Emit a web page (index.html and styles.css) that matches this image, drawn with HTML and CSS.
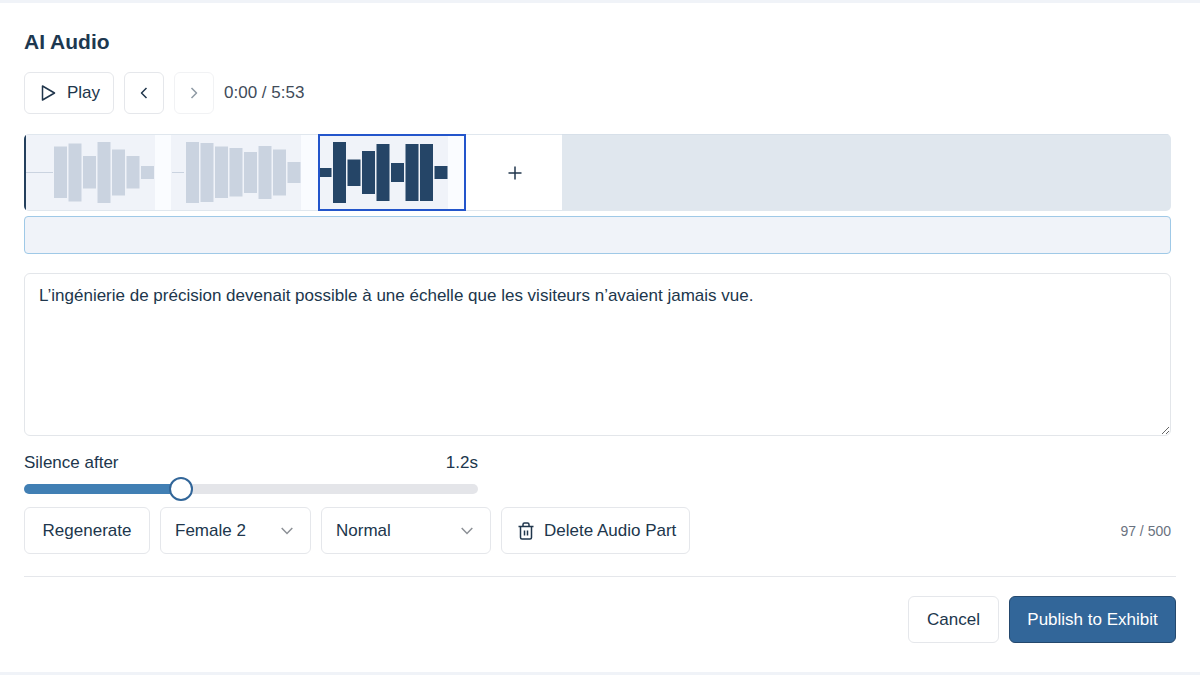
FILE: index.html
```html
<!DOCTYPE html>
<html lang="en">
<head>
<meta charset="utf-8">
<meta name="viewport" content="width=device-width, initial-scale=1">
<title>AI Audio</title>
<link rel="stylesheet" href="styles.css">
</head>
<body>
<main class="panel">
  <div class="editor">
    <h1 class="title">AI Audio</h1>
    <div class="transport">
      <button class="btn btn-play" type="button">
        <svg class="icon" width="15" height="18" viewBox="0 0 15 18"><path d="M1.500 2 13.500 9l-12 7Z"/></svg>
        Play
      </button>
      <button class="btn btn-step" type="button" aria-label="Previous part">
        <svg class="icon" width="12" height="14" viewBox="0 0 12 14"><path d="M8.500 2 3.500 7l5 5"/></svg>
      </button>
      <button class="btn btn-step" type="button" aria-label="Next part" disabled>
        <svg class="icon" width="12" height="14" viewBox="0 0 12 14"><path d="M3.500 2l5 5-5 5"/></svg>
      </button>
      <span class="time">0:00 / 5:53</span>
    </div>

    <div class="timeline">
      <button class="part" type="button" aria-label="Audio part 1">
        <svg class="wave wave-playhead" width="131" height="75" viewBox="2 0 129 75">
          <path d="M2 37h27v1H2zM30 11.500h13v51.500H30zM44.500 8.500h13v58h-13zM59 21h13v32.500H59zM73.500 7h13v61h-13zM88 14.500h13v46H88zM102.500 21h13v32.500h-13zM117 31h13v13h-13z"/>
        </svg>
      </button>
      <button class="part" type="button" aria-label="Audio part 2">
        <svg class="wave" width="130" height="75" viewBox="0 0 130 75">
          <path d="M1 37h12v1H1zM15 7h13v61H15zM29.500 8h13v59h-13zM44 11.500h13V63H44zM58.500 13h13v48.500h-13zM73 17h13v41H73zM87.500 11h13v53h-13zM102 14.500h13v46h-13zM116.500 27h13v21h-13z"/>
        </svg>
      </button>
      <button class="part part-selected" type="button" aria-label="Audio part 3" aria-pressed="true">
        <svg class="wave" width="128" height="73" viewBox="0 0 128 73">
          <path d="M0 32h11.500v9H0zM13 6h13v61H13zM27.500 23.500h13V50h-13zM42 15h13v43H42zM56.500 8h13v57h-13zM71 27h13v19H71zM85.500 8h13v57h-13zM100 8h13v57h-13zM114.500 30h13v13h-13z"/>
        </svg>
      </button>
      <button class="add" type="button" aria-label="Add part">
        <svg class="icon" width="14" height="14" viewBox="0 0 14 14"><path d="M7 .5v13M.5 7h13"/></svg>
      </button>
      <div class="rest"></div>
    </div>
    <div class="lane"></div>

    <textarea class="script" aria-label="Script">L’ingénierie de précision devenait possible à une échelle que les visiteurs n’avaient jamais vue.</textarea>

    <div class="silence">
      <div class="silence-head">
        <label for="silence">Silence after</label>
        <output for="silence">1.2s</output>
      </div>
      <input class="slider" id="silence" type="range" min="0" max="3.5" step="0.01" value="1.18">
    </div>

    <div class="controls">
      <button class="btn btn-text" type="button">Regenerate</button>
      <div class="select select-voice">
        <select aria-label="Voice"><option>Female 2</option></select>
        <svg class="chevron" width="12" height="8" viewBox="0 0 12 8"><path d="M.7 1 6 6.500 11.300 1"/></svg>
      </div>
      <div class="select select-speed">
        <select aria-label="Speed"><option>Normal</option></select>
        <svg class="chevron" width="12" height="8" viewBox="0 0 12 8"><path d="M.7 1 6 6.500 11.300 1"/></svg>
      </div>
      <button class="btn btn-delete" type="button">
        <svg class="icon" width="16" height="20" viewBox="0 0 16 20"><path d="M.5 5.500h15M2.500 5.500v11q0 1.500 1.500 1.500h8q1.500 0 1.500-1.500v-11M5 5.500v-2Q5 2 6.500 2h3Q11 2 11 3.500v2M6.500 9.500v5M9.500 9.500v5"/></svg>
        Delete Audio Part
      </button>
      <span class="count">97 / 500</span>
    </div>
  </div>

  <footer class="footer">
    <button class="btn btn-cancel" type="button">Cancel</button>
    <button class="btn btn-primary" type="button">Publish to Exhibit</button>
  </footer>
</main>
</body>
</html>
```
FILE: styles.css
```css
* { box-sizing: border-box; }

body {
  margin: 0;
  background: #fff;
  color: #20364c;
  font: 17px/24px "Liberation Sans", Arial, sans-serif;
}

button, select, textarea { font: inherit; color: inherit; }
button { cursor: pointer; }

.panel {
  border-top: 3px solid #f0f3f8;
  border-bottom: 3px solid #f0f3f8;
  padding: 26px 24px 29px;
}

.editor { padding-right: 5px; }

.title {
  margin: 0 0 17px;
  color: #1d3850;
  font-size: 21px;
  line-height: 26px;
}

.transport {
  display: flex;
  align-items: center;
  gap: 10px;
  margin-bottom: 20px;
}

.btn {
  display: inline-flex;
  align-items: center;
  justify-content: center;
  height: 47px;
  padding: 0;
  border: 1px solid #e5e7eb;
  border-radius: 6px;
  background: #fff;
  white-space: nowrap;
}

.btn-play {
  justify-content: flex-start;
  width: 90px;
  height: 42px;
  padding-left: 16px;
  gap: 11px;
}
.btn-step { width: 40px; height: 42px; }
.btn-step:disabled { opacity: 0.5; }

.icon {
  flex: none;
  fill: none;
  stroke: currentColor;
  stroke-width: 1.5;
  stroke-linejoin: round;
}

.time { color: #414b59; }

.timeline {
  display: flex;
  height: 77px;
  margin-bottom: 5px;
  border-radius: 5px;
  overflow: hidden;
}

.part, .add {
  display: flex;
  flex: none;
  align-items: center;
  padding: 0;
  border: solid #e0e7ee;
  border-width: 1px 0;
  background: #fafcff;
}

.part { width: 147px; }

.wave {
  background: #f0f3f9;
  fill: #cad3e0;
}

.wave-playhead { border-left: 2px solid #24405d; }

.part-selected {
  width: 148px;
  border: 2px solid #2355cb;
}
.part-selected .wave { fill: #254567; }

.add {
  justify-content: center;
  width: 96px;
  background: #fff;
  padding-left: 2px;
}

.rest {
  flex: 1;
  border: solid #d7e0e9;
  border-width: 1px 0 0;
  background: #e0e7ee;
}

.lane {
  height: 38px;
  margin-bottom: 19px;
  border: 1px solid #9fc9e7;
  border-radius: 4px;
  background: #f0f3f9;
}

.script {
  display: block;
  width: 100%;
  height: 163px;
  margin-bottom: 15px;
  padding: 10px 14px;
  border: 1px solid #e3e6ea;
  border-radius: 6px;
  background: #fff;
  resize: vertical;
  outline: none;
}

.silence {
  display: flex;
  flex-direction: column;
  gap: 2px;
  width: 454px;
  max-width: 100%;
  margin-bottom: 6px;
}

.silence-head { display: flex; justify-content: space-between; }

.slider {
  appearance: none;
  width: 100%;
  height: 24px;
  margin: 0;
  background: transparent;
}

.slider::-webkit-slider-runnable-track {
  height: 10px;
  border-radius: 5px;
  background: linear-gradient(to right, #417fb4 35%, #e4e5e9 35%);
}

.slider::-webkit-slider-thumb {
  appearance: none;
  width: 24px;
  height: 24px;
  margin-top: -7px;
  border: 2px solid #326699;
  border-radius: 50%;
  background: #fff;
}

.controls {
  display: flex;
  align-items: center;
  gap: 10px;
  margin-bottom: 22px;
}

.btn-text { width: 126px; }
.btn-delete {
  justify-content: flex-start;
  width: 189px;
  padding-left: 16px;
  gap: 10px;
}

.select { display: grid; align-items: center; }
.select-voice { width: 151px; }
.select-speed { width: 170px; }

.select select {
  grid-area: 1 / 1;
  width: 100%;
  height: 47px;
  padding: 0 32px 0 14px;
  border: 1px solid #e5e7eb;
  border-radius: 6px;
  background: #fff;
  appearance: none;
}

.chevron {
  grid-area: 1 / 1;
  justify-self: end;
  margin-right: 18px;
  fill: none;
  stroke: #8c9096;
  stroke-width: 1.5;
  pointer-events: none;
}

.count {
  margin-left: auto;
  color: #6a7280;
  font-size: 14px;
}

.footer {
  display: flex;
  justify-content: flex-end;
  gap: 10px;
  padding-top: 19px;
  border-top: 1px solid #e5e7eb;
}

.btn-cancel { width: 91px; }

.btn-primary {
  width: 167px;
  border-color: #24486d;
  background: #326699;
  color: #fff;
}
```
